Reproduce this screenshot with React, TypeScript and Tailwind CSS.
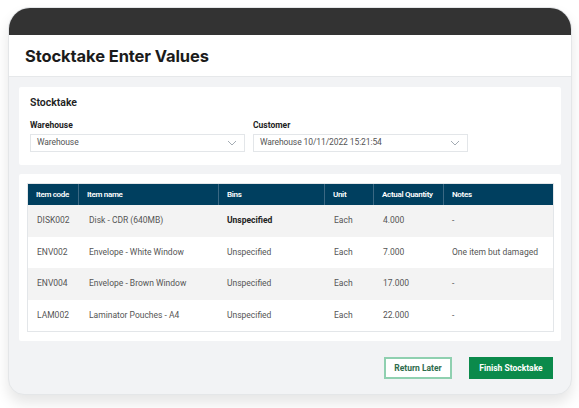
import React from "react";

const rows = [
  { code: "DISK002", name: "Disk - CDR (640MB)", bins: "Unspecified", bold: true, unit: "Each", qty: "4.000", notes: "-" },
  { code: "ENV002", name: "Envelope - White Window", bins: "Unspecified", bold: false, unit: "Each", qty: "7.000", notes: "One item but damaged" },
  { code: "ENV004", name: "Envelope - Brown Window", bins: "Unspecified", bold: false, unit: "Each", qty: "17.000", notes: "-" },
  { code: "LAM002", name: "Laminator Pouches - A4", bins: "Unspecified", bold: false, unit: "Each", qty: "22.000", notes: "-" },
];

function Chevron() {
  return (
    <svg width="10" height="6" viewBox="0 0 10 6" fill="none">
      <path d="M1 1l4 4 4-4" stroke="#9aa3ab" strokeWidth="0.9" />
    </svg>
  );
}

function Select({ value, w }: { value: string; w: string }) {
  return (
    <div className={`${w} h-[18px] border border-[#e3e6e9] bg-white flex items-center justify-between pl-[6px] pr-[7px]`}>
      <span className="text-[8.5px] text-[#555] tracking-[-0.1px]">{value}</span>
      <Chevron />
    </div>
  );
}

export default function App() {
  const cols = "grid grid-cols-[51px_140px_106px_49px_70px_1fr]";
  return (
    <div className="w-[579px] h-[408px] bg-white pt-[7px] pl-[8px]" style={{ fontFamily: "Roboto, 'Liberation Sans', sans-serif" }}>
      <div className="w-[564px] h-[388px] rounded-t-[22px] rounded-b-[16px] overflow-hidden bg-[#f2f3f5] border border-[#e4e6e8] shadow-[0_8px_14px_rgba(0,0,0,0.10)] flex flex-col">
        <div className="h-[27px] bg-[#333333] shrink-0" />
        <div className="h-[42px] bg-white border-b border-[#e6e8ea] flex items-center pl-[16px] shrink-0">
          <h1 className="text-[16.5px] font-bold text-[#1b1b1b] tracking-[-0.1px] mt-[1px]" style={{ fontFamily: "Inter, 'Liberation Sans', sans-serif" }}>
            Stocktake Enter Values
          </h1>
        </div>
        <div className="flex-1 px-[10px] pt-[10px] flex flex-col">
          <div className="bg-white rounded-[2px] h-[78px] px-[11px] pt-[8px]">
            <div className="text-[10.5px] font-semibold text-[#222]">Stocktake</div>
            <div className="flex gap-[8px] mt-[8px]">
              <div className="flex flex-col">
                <div className="text-[8.5px] font-bold text-[#222] mb-[2px]">Warehouse</div>
                <Select value="Warehouse" w="w-[215px]" />
              </div>
              <div className="flex flex-col">
                <div className="text-[8.5px] font-bold text-[#222] mb-[2px]">Customer</div>
                <Select value="Warehouse 10/11/2022 15:21:54" w="w-[215px]" />
              </div>
            </div>
          </div>
          <div className="bg-white rounded-[2px] mt-[9px] pl-[8px] pr-[7px] py-[9px]">
            <div className="border border-[#e3e6e9]">
              <div className={`${cols} h-[21px] bg-[#003f5f] text-white text-[8px] font-semibold tracking-[-0.3px]`}>
                {["Item code", "Item name", "Bins", "Unit", "Actual Quantity", "Notes"].map((h, i) => (
                  <div key={h} className={`flex items-center whitespace-nowrap px-[8px] ${i < 5 ? "border-r border-[#3b6883]" : ""}`}>
                    {h}
                  </div>
                ))}
              </div>
              {rows.map((r, i) => (
                <div key={r.code} className={`${cols} h-[31.5px] text-[8.5px] text-[#555] ${i % 2 === 0 ? "bg-[#f3f3f3]" : "bg-white"}`}>
                  <div className="flex items-center px-[9px]">{r.code}</div>
                  <div className="flex items-center px-[10px]">{r.name}</div>
                  <div className={`flex items-center px-[8px] ${r.bold ? "font-bold text-[#222]" : ""}`}>{r.bins}</div>
                  <div className="flex items-center px-[9px]">{r.unit}</div>
                  <div className="flex items-center px-[9px]">{r.qty}</div>
                  <div className="flex items-center px-[8px]">{r.notes}</div>
                </div>
              ))}
            </div>
          </div>
          <div className="flex justify-end gap-[17px] mt-[16px] pr-[8px]">
            <button className="w-[68px] h-[22px] border-2 border-[#8fd0b0] bg-white text-[8.5px] font-bold text-[#2e6b4c]">
              Return Later
            </button>
            <button className="w-[84px] h-[22px] bg-[#0b8a4b] text-[8.5px] font-bold text-white">
              Finish Stocktake
            </button>
          </div>
        </div>
      </div>
    </div>
  );
}
